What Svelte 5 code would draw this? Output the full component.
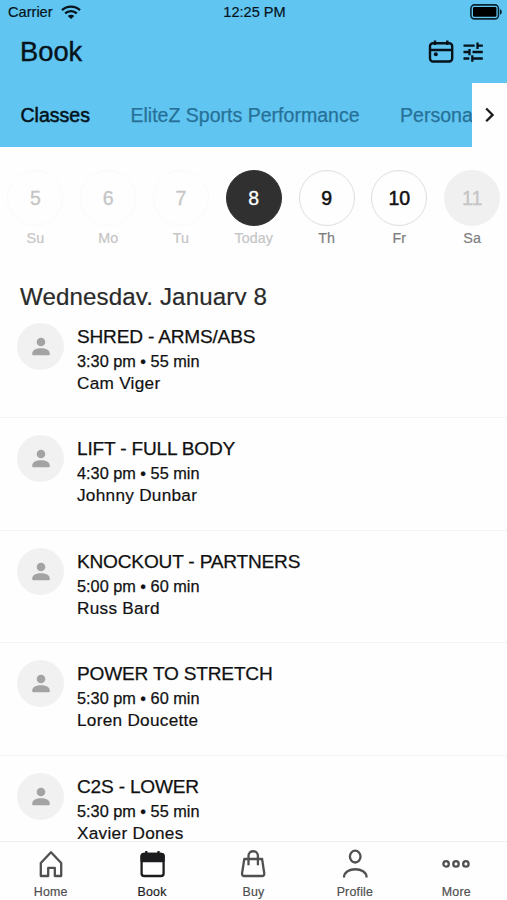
<script>
  const days = [
    { n: '5', label: 'Su', kind: 'past' },
    { n: '6', label: 'Mo', kind: 'past' },
    { n: '7', label: 'Tu', kind: 'past' },
    { n: '8', label: 'Today', kind: 'today' },
    { n: '9', label: 'Th', kind: 'open' },
    { n: '10', label: 'Fr', kind: 'open' },
    { n: '11', label: 'Sa', kind: 'closed' }
  ];
  const classes = [
    { title: 'SHRED - ARMS/ABS', time: '3:30 pm • 55 min', coach: 'Cam Viger' },
    { title: 'LIFT - FULL BODY', time: '4:30 pm • 55 min', coach: 'Johnny Dunbar' },
    { title: 'KNOCKOUT - PARTNERS', time: '5:00 pm • 60 min', coach: 'Russ Bard' },
    { title: 'POWER TO STRETCH', time: '5:30 pm • 60 min', coach: 'Loren Doucette' },
    { title: 'C2S - LOWER', time: '5:30 pm • 55 min', coach: 'Xavier Dones' }
  ];
  const nav = ['Home', 'Book', 'Buy', 'Profile', 'More'];
</script>

<div class="app">
  <header>
    <div class="status">
      <div class="carrier">
        <span>Carrier</span>
        <svg width="20" height="15" viewBox="0 0 20 15" fill="none" stroke="#06131b" stroke-width="2.4">
          <path d="M1 5.2C6 .4 14 .4 19 5.2" />
          <path d="M4.2 8.4c3.3-3.1 8.3-3.1 11.6 0" />
          <path d="M10 14 6.7 10.9c1.9-1.7 4.7-1.7 6.6 0Z" fill="#06131b" stroke="none" />
        </svg>
      </div>
      <span class="clock">12:25 PM</span>
      <svg class="battery" width="33" height="16" viewBox="0 0 33 16">
        <rect x=".9" y=".9" width="27.6" height="14" rx="3.6" fill="none" stroke="#0b2432" stroke-width="1.6" />
        <rect x="3" y="3" width="23.4" height="9.8" rx="1.3" fill="#000" />
        <path d="M30 5.2c2.4.6 2.4 4.8 0 5.4Z" fill="#0b2432" />
      </svg>
    </div>
    <div class="titlebar">
      <h1>Book</h1>
      <div class="actions">
        <svg width="26" height="24" viewBox="0 0 26 24" fill="none" stroke="#06131b" stroke-width="2.4">
          <rect x="2" y="3.3" width="22.2" height="18.2" rx="3" />
          <path d="M2 10h22.2M7 .5v4.5M19.3 .5v4.5" />
          <circle cx="7.8" cy="14.3" r="2" fill="#06131b" stroke="none" />
        </svg>
        <svg width="21" height="20" viewBox="0 0 21 20" fill="none" stroke="#06131b" stroke-width="2.3">
          <path d="M.5 3.7h11.2M14.5 3.7h5.3M14.5 .5v6.4M.5 10h6M6.5 7v6.3M9.5 10h10.3M.5 16.5h5.8M9.3 13.3v6.4M9.3 16.5h10.5" />
        </svg>
      </div>
    </div>
    <div class="tabs">
      <div class="tablist">
        <span class="tab active">Classes</span>
        <span class="tab">EliteZ Sports Performance</span>
        <span class="tab">Persona</span>
      </div>
      <div class="next">
        <svg width="10" height="16" viewBox="0 0 10 16" fill="none" stroke="#1b1b1b" stroke-width="2.3"><path d="m1.2 1.5 6.4 6.4-6.4 6.4" /></svg>
      </div>
    </div>
  </header>

  <section class="week">
    {#each days as d}
      <div class="day {d.kind}">
        <div class="num">{d.n}</div>
        <div class="name">{d.label}</div>
      </div>
    {/each}
  </section>

  <h2>Wednesday, January 8</h2>

  <main>
    {#each classes as c}
      <article>
        <div class="avatar">
          <svg width="18" height="19" viewBox="0 0 18 19" fill="#a3a3a3">
            <circle cx="9" cy="5" r="4.3" />
            <path d="M.2 16.8C.2 12.9 4.4 11.3 9 11.3s8.8 1.6 8.8 5.5c0 1-.5 1.5-1.4 1.5H1.6C.7 18.3.2 17.8.2 16.8Z" />
          </svg>
        </div>
        <div class="info">
          <div class="title">{c.title}</div>
          <div class="time">{c.time}</div>
          <div class="coach">{c.coach}</div>
        </div>
      </article>
    {/each}
  </main>

  <nav>
    {#each nav as item}
      <div class="item" class:selected={item === 'Book'}>
        <svg width="30" height="30" viewBox="0 0 30 30" fill="none" stroke="currentColor" stroke-width="2.3" stroke-linejoin="round">
          {#if item === 'Home'}
            <path d="M4.8 27V14L15 3.2l10.2 10.8v13h-6.4v-8.2h-6.6V27Z" />
          {:else if item === 'Book'}
            <rect x="4.6" y="5" width="22" height="22" rx="2.6" />
            <path d="M4.6 7.5C4.6 6 5.5 5 7 5h17.2c1.5 0 2.4 1 2.4 2.5V12h-22Z" fill="currentColor" />
            <path d="M9.3 2v4M21.5 2v4" />
          {:else if item === 'Buy'}
            <path d="M6.3 10h17.8l2.1 14c.3 2-.5 3-2.2 3H6.3c-1.7 0-2.5-1-2.2-3Z" />
            <path d="M10.5 16.2V6.8c0-6.1 9.400-6.1 9.400 0v9.400" />
          {:else if item === 'Profile'}
            <ellipse cx="15.2" cy="7.6" rx="5.3" ry="5.900" />
            <path d="M4 28.5c0-11 22.6-11 22.6 0" />
          {:else}
            <circle cx="5.1" cy="14.9" r="2.7" />
            <circle cx="15" cy="14.9" r="2.7" />
            <circle cx="24.900" cy="14.9" r="2.7" />
          {/if}
        </svg>
        <span>{item}</span>
      </div>
    {/each}
  </nav>
</div>

<style>
  :global(body) { margin: 0; background: #fefefe; }
  .app {
    width: 507px; height: 900px; overflow: hidden;
    display: flex; flex-direction: column;
    background: #fefefe; color: #111;
    font-family: "Liberation Sans", Arial, sans-serif;
  }
  svg { display: block; flex: none; }
  header { height: 147px; flex: none; background: #60c5f1; color: #06131b; display: flex; flex-direction: column; }
  .status { height: 24px; display: grid; grid-template-columns: 1fr auto 1fr; align-items: center; padding: 0 4px 0 8px; font-size: 14.6px; -webkit-text-stroke: .2px; }
  .carrier { display: flex; align-items: center; gap: 8px; }
  .clock { margin-left: -2px; }
  .battery { justify-self: end; }
  .titlebar { height: 59px; display: flex; justify-content: space-between; padding: 0 23px 0 20px; }
  h1 { margin: 12px 0 0; font-size: 27.3px; line-height: 32px; font-weight: 400; -webkit-text-stroke: .4px; }
  .actions { display: flex; align-items: center; gap: 10px; height: 56px; }
  .actions svg:first-child { margin-right: -1px; }
  .tabs { height: 64px; display: flex; }
  .tablist { flex: 1; min-width: 0; overflow: hidden; display: flex; gap: 40.5px; padding: 1px 0 0 20.5px; align-items: center; white-space: nowrap; }
  .tab { flex: none; font-size: 19.55px; color: #277198; -webkit-text-stroke: .25px; }
  .tab.active { color: #03121a; -webkit-text-stroke: .5px; }
  .next { width: 35px; background: #fefefe; display: flex; align-items: center; justify-content: center; }
  .week { flex: none; height: 135.5px; box-sizing: border-box; padding: 23px 0 0; margin: 0 -2px 0 -1px; display: grid; grid-template-columns: repeat(7, 72.8px); }
  .day { display: flex; flex-direction: column; align-items: center; color: #c5c5c5; }
  .num { width: 56px; height: 56px; box-sizing: border-box; border-radius: 50%; border: 1px solid #fafafa; font-size: 19.5px; display: flex; align-items: center; justify-content: center; -webkit-text-stroke: .3px; }
  .name { margin-top: 4px; font-size: 14.3px; line-height: 17px; letter-spacing: .1px; -webkit-text-stroke: .2px; }
  .today .num { background: #303030; border-color: #303030; color: #fff; }
  .open .num { border-color: #dedede; color: #111; -webkit-text-stroke: .5px; }
  .open .name, .closed .name { color: #7d7d7d; }
  .closed .num { background: #f0f0f0; border-color: #f0f0f0; }
  h2 { flex: none; margin: 0; height: 22.5px; padding-left: 20px; overflow: hidden; font-size: 24.1px; line-height: 27px; letter-spacing: .14px; font-weight: 400; color: #2a2a2a; -webkit-text-stroke: .2px; }
  main { flex: 1; min-height: 0; overflow: hidden; }
  article { height: 112.4px; box-sizing: border-box; padding: 18.1px 17px 0; display: flex; gap: 13px; }
  article + article { border-top: 1px solid #f3f3f3; padding-top: 17px; }
  .avatar { width: 47px; height: 47px; flex: none; border-radius: 50%; background: #f1f1f1; display: flex; align-items: center; justify-content: center; }
  .info { white-space: nowrap; }
  .title { margin-top: 2px; font-size: 19.1px; line-height: 24px; letter-spacing: -.2px; -webkit-text-stroke: .25px; }
  .time { font-size: 16.3px; line-height: 24px; -webkit-text-stroke: .25px; }
  .coach { font-size: 17.2px; line-height: 21px; letter-spacing: .28px; -webkit-text-stroke: .2px; }
  nav { flex: none; height: 59px; box-sizing: border-box; border-top: 1px solid #f0f0f0; display: grid; grid-template-columns: repeat(5, 1fr); }
  .item { display: flex; flex-direction: column; align-items: center; padding-top: 7px; color: #505050; }
  .item span { margin-top: 4px; font-size: 12.4px; line-height: 18px; letter-spacing: .2px; -webkit-text-stroke: .2px; }
  .item.selected { color: #1c1c1f; }
</style>
